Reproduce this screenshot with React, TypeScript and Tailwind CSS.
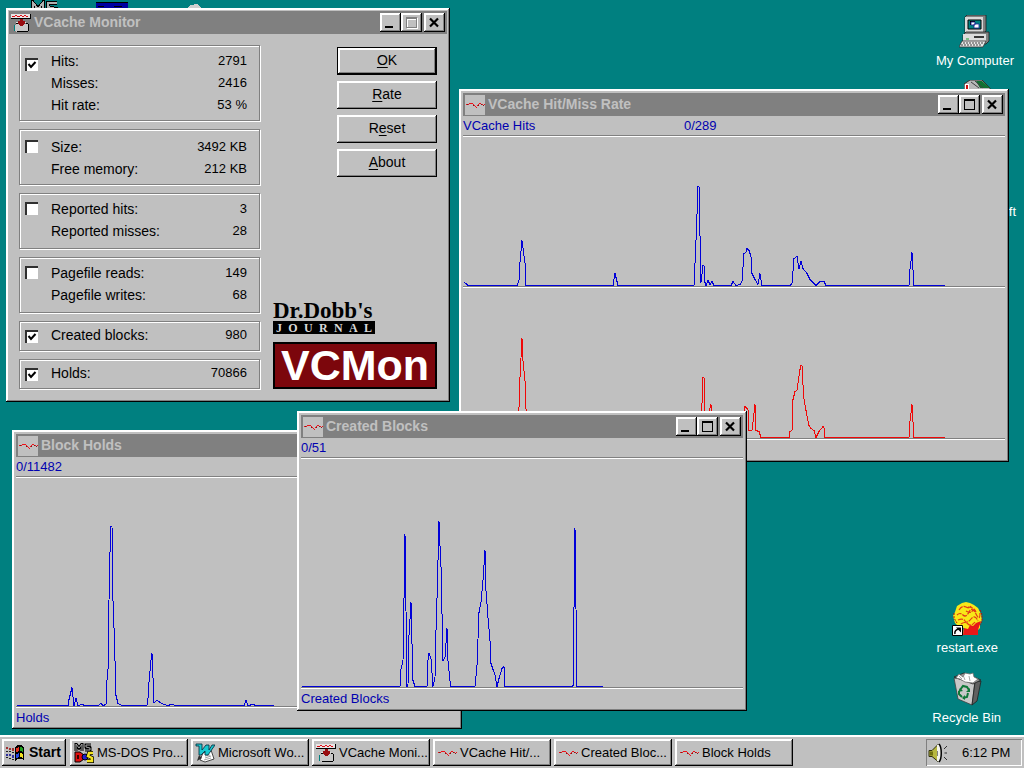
import type { ReactNode } from "react";

const RAISED =
  "bg-[#c0c0c0] shadow-[inset_-1px_-1px_#000,inset_1px_1px_#fff,inset_-2px_-2px_#808080,inset_2px_2px_#fff]";

const HITS =
  "1,145 3,146 5,148 54,148 56,143 57,125 59,103 61,118 62,125 63,148 150,148 152,136 154,144 155,148 231,148 233,103 234,77 235,49 236,49 237,98 238,145 240,128 241,128 242,145 243,148 245,143 247,147 249,144 251,148 268,148 270,144 273,148 277,147 279,144 281,116 283,115 284,111 286,113 288,119 289,136 292,142 295,147 297,136 299,148 327,148 329,146 331,121 334,119 336,131 338,124 340,131 344,136 347,142 350,145 353,148 357,144 361,144 363,148 446,148 447,132 449,115 450,132 451,148 482,148";
const MISSES =
  "1,148 55,148 57,88 59,49 60,71 62,91 64,148 238,148 239,114 240,88 241,88 242,121 243,148 246,122 248,115 249,122 250,148 281,148 282,117 285,120 286,141 289,141 292,115 293,141 296,142 298,148 326,148 327,142 329,141 330,110 332,102 334,101 336,87 337,80 338,76 339,76 340,95 341,109 343,121 346,136 348,139 351,141 353,148 356,142 360,137 361,138 362,148 446,148 447,132 449,115 450,132 451,148 482,148";
const BLOCKS =
  "1,227 99,227 100,210 102,201 103,139 104,75 105,151 106,227 107,225 108,176 110,143 111,184 112,221 114,227 126,227 127,201 128,194 130,199 132,227 134,218 135,171 136,139 137,101 138,62 139,86 140,107 142,201 144,198 146,169 147,201 149,221 150,227 174,227 176,206 178,153 180,143 182,121 184,91 185,131 187,158 189,181 190,204 192,210 194,215 196,227 198,219 201,209 203,207 204,227 272,227 273,149 274,69 275,149 276,227 302,227";
const HOLDS =
  "1,227 52,227 53,221 56,209 58,227 60,220 62,227 66,226 69,227 82,227 85,225 87,227 90,226 91,202 92,192 93,122 94,74 95,48 96,48 97,122 98,149 99,182 100,217 102,225 106,227 131,227 132,220 133,204 135,182 136,175 138,224 141,222 146,225 151,227 156,226 160,227 228,227 230,222 232,227 237,226 240,227 258,227";

function PulseIcon() {
  return (
    <svg viewBox="0 0 20 20" className="size-5 shrink-0 bg-[#c0c0c0]" aria-hidden="true" shapeRendering="crispEdges">
      <path d="M1 9.500h3M4 8.500h4M8 9.500h1M9 10.500h1M10 11.500h1M11 12.500h1M12 10.500h1M13 9.500h1M14 8.500h2M17 9.500h1M19 9.500h1" stroke="#f01018" fill="none" />
      <path d="M2 9.500h1M8 10.500h1M13 10.500h1M16 9.500h1M18 10.500h1" stroke="#702020" fill="none" />
    </svg>
  );
}

function CacheIcon() {
  return (
    <svg viewBox="0 0 20 20" className="size-5 shrink-0" aria-hidden="true" shapeRendering="crispEdges">
      <path d="M5 11h12v1h1v6h-1v1H5v-1H4v-6h1z" fill="#c8c8c8" />
      <path d="M5 10.500h2M15 10.500h2M17.500 11v7M6 18.500h11" stroke="#000" fill="none" />
      <path d="M3.500 12v6" stroke="#008080" fill="none" />
      <path d="M5 9.500h10" stroke="#e0e0e0" fill="none" />
      <path d="M0 1h19v4H0z" fill="#e8e4e4" />
      <path d="M0 5.500h20M19.500 1v5" stroke="#000" fill="none" />
      <path d="M1 3.500h3M4 2.500h2M6 3.500h3M9 2.500h2M11 3.500h2M13 2.500h2M15 3.500h2" stroke="#e01018" fill="none" />
      <path d="M9 6h3v2h2v3h-1v1h-1v1h-3v-1H8v-1H7V8h2z" fill="#980c10" />
    </svg>
  );
}

function MsDosIcon() {
  return (
    <svg viewBox="0 0 20 20" className="size-5 shrink-0" aria-hidden="true">
      <path d="M2 8V1l3 4 3-4v7M17 2h-5v2l4 1v2h-5" fill="none" stroke="#000" strokeWidth="3" />
      <path d="M2 8V1l3 4 3-4v7M17 2h-5v2l4 1v2h-5" fill="none" stroke="#a8a8a8" />
      <path d="M1 9h5l4 3v4l-4 3H1z" fill="#e01010" stroke="#000" />
      <path d="M4 12v4" stroke="#000" strokeWidth="1.500" />
      <circle cx="11" cy="14" r="3" fill="#2020d0" stroke="#000" />
      <path d="M19 10h-4l-1 3 4 2v3h-5" fill="none" stroke="#000" strokeWidth="4" />
      <path d="M19 10h-4l-1 3 4 2v3h-5" fill="none" stroke="#f4e420" strokeWidth="2.500" />
    </svg>
  );
}

function WordIcon() {
  return (
    <svg viewBox="0 0 20 20" className="size-5 shrink-0" aria-hidden="true">
      <path d="M8 10l8-3 3 9-9 3-5-2z" fill="#fff" stroke="#202020" strokeWidth=".8" />
      <path d="M10 13l5-1M10 15l6-2M9 17l7-2" stroke="#888" strokeWidth=".8" />
      <path d="M1 1h6v6l4-5h3v5l3-5h3l-7 10h-3V8l-4 4H4V3H1z" fill="#18c8d0" stroke="#083848" strokeWidth=".9" />
      <path d="M4 12l-2 6 5-3z" fill="#303030" />
    </svg>
  );
}

function FlagIcon() {
  return (
    <svg viewBox="0 0 20 20" className="size-5 shrink-0" aria-hidden="true" shapeRendering="crispEdges">
      <path d="M10 4l2-2h4l3 2v13l-3-1h-3l-3 2z" fill="#000" />
      <path d="M11 5l3-1v4l-3 1z" fill="#e03020" />
      <path d="M15 4l3 1v4l-3-1z" fill="#20a020" />
      <path d="M11 11l3-1v4l-3 1z" fill="#2848e0" />
      <path d="M15 10l3 1v4l-3-1z" fill="#f0e020" />
      <path d="M7 5h2v3H7zM4 5h2v2H4zM1 4h2v2H1z" fill="#a03030" />
      <path d="M7 12h2v3H7zM4 11h2v2H4zM1 11h2v2H1z" fill="#3030a0" />
      <path d="M7 9h2v1H7zM4 8h2v1H4zM1 8h2v1H1zM7 16h2v1H7zM4 15h2v1H4zM1 14h2v1H1z" fill="#202020" />
    </svg>
  );
}

function SpeakerIcon() {
  return (
    <svg viewBox="0 0 20 20" className="size-5 shrink-0" aria-hidden="true">
      <path d="M1 7.500h3l6-6v17l-6-5H1z" fill="#b8b840" stroke="#303010" />
      <path d="M2 8.500h3v4H2z" fill="#707010" />
      <path d="M9 2h2l2 4v8l-2 4H9z" fill="#f4f4ec" />
      <path d="M11 1c3 3 3 15 0 18" fill="none" stroke="#000" strokeWidth="1.500" />
      <path d="M9.500 8v5" stroke="#808080" />
      <path d="M16 6l3-3M16.500 10H19M16 14l3 3" stroke="#303030" fill="none" />
    </svg>
  );
}

function ComputerIcon() {
  return (
    <svg viewBox="0 0 32 34" className="h-[34px] w-8" aria-hidden="true">
      <path d="M6 2l2-2h19v16l-2 2H6z" fill="#808080" stroke="#202020" strokeWidth=".8" />
      <path d="M6 2h18v15H6z" fill="#d8d8d8" />
      <path d="M9 5h13v9H9z" fill="#008080" stroke="#000" />
      <path d="M11 6h5v4h-5z" fill="#000" />
      <path d="M12 7h4v3h-4zM15 9h5v4h-5z" fill="#fff" stroke="#182090" strokeWidth=".8" />
      <path d="M4 20l3-3h23v9l-3 3H4z" fill="#808080" stroke="#202020" strokeWidth=".8" />
      <path d="M4 19h23v7H4z" fill="#dcdcdc" />
      <path d="M15 22h10" stroke="#000" strokeWidth="1.500" />
      <path d="M7 24h3" stroke="#20a030" />
      <path d="M3 26h24l-3 6H0z" fill="#e8e8e8" stroke="#303030" strokeWidth=".8" />
      <path d="M4 28h21M2 30h21" stroke="#404040" strokeDasharray="2 1" />
    </svg>
  );
}

function ExplosionIcon() {
  return (
    <svg viewBox="0 0 34 34" className="size-[34px]" aria-hidden="true">
      <path d="M12 1l4-1 4 1 4 2 4 3 3 6 1 6-2 4v4l-2 2v5H13l1-7-5-1-4-4-2-7 2-4 2-6z" fill="#f8e818" />
      <path d="M14 26l4 1 2-4 3 1 3-3 5-2-2 6-1 3v5H13z" fill="#e81818" />
      <path d="M9 8q3-5 7-3t5-1M18 5q6 0 8 5M7 13q3-3 6 0t6-3 7 2 4-1M8 18q5-2 7 1t6-2 7 2M16 9q5 3 7-1M11 22q4-3 7 0t7-2" fill="none" stroke="#e03818" strokeWidth="1.200" strokeDasharray="5 1" />
      <path d="M4 11v5l3 5M30 8l2 5v6l-2 4" fill="none" stroke="#b01010" strokeDasharray="2 1" />
      <path d="M2.500 23.500h10v10h-10z" fill="#fff" stroke="#000" />
      <path d="M5 32q-1-4 4-5" fill="none" stroke="#000" strokeWidth="1.500" />
      <path d="M6 25.500h5v5z" fill="#000" />
    </svg>
  );
}

function RecycleIcon() {
  return (
    <svg viewBox="0 0 32 34" className="h-[34px] w-8" aria-hidden="true">
      <path d="M3 6l4 21 14 6 3-24z" fill="#c8c8c8" stroke="#404040" strokeWidth=".8" />
      <path d="M21 33l5-4 4-20-6 1z" fill="#606060" stroke="#202020" strokeWidth=".8" />
      <path d="M3 5l10-4 17 7-8 4z" fill="#989898" stroke="#202020" strokeWidth=".8" />
      <path d="M5 6l3-4 4 3 2-4 5 1 3-1 1 4 4 2-5 4-8-1-5-3z" fill="#fff" stroke="#707070" strokeWidth=".8" />
      <path d="M12 3l2 5M18 4l1 5M8 4l3 3" stroke="#909090" strokeWidth=".8" />
      <path d="M9 18l3-4 4 1 2 3M17 21l-1 4-4 1M11 25l-3-3v-3" fill="none" stroke="#107838" strokeWidth="2" />
      <path d="M19 16v4h-4zM14 23v5l-3-2zM7 20l2-4 3 3z" fill="#107838" />
    </svg>
  );
}

function Caption({ kind, disabled }: { kind: "Minimize" | "Maximize" | "Close"; disabled?: boolean }) {
  return (
    <button type="button" aria-label={kind} disabled={disabled} className={`grid h-[19px] w-[21px] place-items-center ${RAISED}`}>
      <svg viewBox="0 0 13 13" className="size-[13px]" fill="none" stroke={disabled ? "#808080" : "#000"} shapeRendering={kind === "Close" ? "auto" : "crispEdges"}>
        {kind === "Minimize" && <path d="M1 11h8" strokeWidth="2" />}
        {kind === "Maximize" && disabled && <path d="M2.500 2v10.500h10V2M3 3.500h9" stroke="#fff" />}
        {kind === "Maximize" && <path d="M1.500 1v10.500h10V1M1 1.500h11M1 2.500h11" />}
        {kind === "Close" && <path d="M2 2.500l8 8M10 2.500l-8 8" strokeWidth="2.200" />}
      </svg>
    </button>
  );
}

function Window({ title, place, icon, fixed, children }: { title: string; place: string; icon: ReactNode; fixed?: boolean; children: ReactNode }) {
  return (
    <section aria-label={title} className={`absolute flex flex-col ${fixed ? "p-[3px]" : "p-1"} ${RAISED} ${place}`}>
      <header className="flex h-[23px] shrink-0 items-center gap-[3px] bg-[#808080] px-[2px] text-[14px] font-bold text-[#c0c0c0]">
        {icon}
        <h2 className="grow whitespace-nowrap">{title}</h2>
        <div className="flex gap-[2px]">
          <div className="flex">
            <Caption kind="Minimize" />
            <Caption kind="Maximize" disabled={fixed} />
          </div>
          <Caption kind="Close" />
        </div>
      </header>
      {children}
    </section>
  );
}

function Chart({ points, label, size, red }: { points: string; label: string; size: string; red?: boolean }) {
  return (
    <svg role="img" aria-label={label} className={`block w-full shrink-0 ${size}`}>
      <polyline
        points={points}
        transform="translate(0 0.5)"
        fill="none"
        stroke={red ? "#f00808" : "#0000d8"}
        shapeRendering="crispEdges"
      />
    </svg>
  );
}

function Rule() {
  return <div className="h-[2px] shrink-0 border-t border-b border-t-[#808080] border-b-white" />;
}

function Stats({ id, rows, checked, pad, mark }: { id: string; rows: [string, string][]; checked?: boolean; pad: string; mark: string }) {
  return (
    <div className={`flex gap-[13px] border border-[#808080] pr-3 pl-[5px] shadow-[1px_1px_#fff,inset_1px_1px_#fff] ${pad}`}>
      <span className={`relative size-[13px] ${mark}`}>
        <input
          id={id}
          type="checkbox"
          defaultChecked={checked}
          className="peer block size-[13px] appearance-none border-t-2 border-l-2 border-[#303030] bg-white"
        />
        <svg viewBox="0 0 13 13" className="pointer-events-none absolute inset-0 hidden size-[13px] peer-checked:block" aria-hidden="true">
          <path d="M3.500 6l2.500 3 4.500-5" fill="none" stroke="#000" strokeWidth="2" />
        </svg>
      </span>
      <div className="grow leading-[22px]">
        {rows.map(([name, value]) => (
          <div key={name} className="flex justify-between">
            <label htmlFor={id} className="text-[14px]">{name}</label>
            <output className="text-[13px]">{value}</output>
          </div>
        ))}
      </div>
    </div>
  );
}

function DialogButton({ before, hot, after, main }: { before?: string; hot: string; after: string; main?: boolean }) {
  return (
    <button type="button" className={`h-7 w-[100px] pb-[2px] text-[14px] ${RAISED} ${main ? "border border-black" : ""}`}>
      {before}
      <span className="underline underline-offset-2">{hot}</span>
      {after}
    </button>
  );
}

function DesktopIcon({ label, place, children }: { label: string; place: string; children?: ReactNode }) {
  return (
    <a href="#" className={`absolute flex flex-col items-center gap-1 text-[13px] leading-4 whitespace-nowrap text-white ${place}`}>
      {children}
      <span>{label}</span>
    </a>
  );
}

const TASKS: [string, ReactNode][] = [
  ["MS-DOS Pro...", <MsDosIcon />],
  ["Microsoft Wo...", <WordIcon />],
  ["VCache Moni...", <CacheIcon />],
  ["VCache Hit/...", <PulseIcon />],
  ["Created Bloc...", <PulseIcon />],
  ["Block Holds", <PulseIcon />],
];

export default function App() {
  return (
    <div className="flex min-h-screen flex-col overflow-hidden bg-[#008080] font-['Liberation_Sans',Arial,sans-serif] text-[13px] text-black">
      <main className="relative grow">
        <svg className="absolute top-0 left-7 h-4 w-44" viewBox="0 0 176 16" aria-hidden="true" shapeRendering="crispEdges">
          <path d="M5 16V3l5 6 5-6v13M29 3h-9v4l8 2v5" fill="none" stroke="#000" strokeWidth="4" />
          <path d="M5 16V3l5 6 5-6v13M29 3h-9v4l8 2v5" fill="none" stroke="#b0b0b0" strokeWidth="2" />
          <path d="M68 2h32v14H68z" fill="#0000a0" />
          <path d="M68 2.500h32M70 6.500h6M86 6.500h8" stroke="#000" />
          <path d="M160 8l2-3h3l1-1h4l3 4z" fill="#d0d0d0" />
        </svg>
        <DesktopIcon label="My Computer" place="top-[15px] right-[10px]"><ComputerIcon /></DesktopIcon>
        <svg className="absolute top-20 right-8 h-4 w-7" viewBox="0 0 28 16" aria-hidden="true">
          <path d="M0 16V4l6-4h12l8 8v8z" fill="#b8b8b8" stroke="#303030" />
          <path d="M1 4h4v7H1z" fill="#fff" />
          <path d="M2 5h2v4H2z" fill="#d01010" />
          <path d="M12 1h6l8 7H16z" fill="#107030" />
          <path d="M7 2l8 6M11 1l8 7" stroke="#404040" />
        </svg>
        <DesktopIcon label="Microsoft" place="top-[204px] right-2" />
        <DesktopIcon label="restart.exe" place="top-[602px] right-[26px]"><ExplosionIcon /></DesktopIcon>
        <DesktopIcon label="Recycle Bin" place="top-[672px] right-[23px]"><RecycleIcon /></DesktopIcon>

        <Window title="VCache Monitor" place="left-[6px] top-2 w-[444px]" icon={<CacheIcon />} fixed>
          <div className="flex justify-between px-[10px] pt-[11px] pb-[10px]">
            <div className="flex w-[241px] flex-col gap-2">
              <Stats id="hits" checked pad="pt-1 pb-1" mark="mt-2" rows={[["Hits:", "2791"], ["Misses:", "2416"], ["Hit rate:", "53 %"]]} />
              <Stats id="size" pad="pt-[6px] pb-1" mark="mt-1" rows={[["Size:", "3492 KB"], ["Free memory:", "212 KB"]]} />
              <Stats id="reported" pad="pt-1 pb-[6px]" mark="mt-1" rows={[["Reported hits:", "3"], ["Reported misses:", "28"]]} />
              <Stats id="pagefile" pad="pt-1 pb-[6px]" mark="mt-1" rows={[["Pagefile reads:", "149"], ["Pagefile writes:", "68"]]} />
              <Stats id="created" checked pad="pt-[2px] pb-1" mark="mt-[6px]" rows={[["Created blocks:", "980"]]} />
              <Stats id="holds" checked pad="pt-[2px] pb-1" mark="mt-[6px]" rows={[["Holds:", "70866"]]} />
            </div>
            <div className="flex w-[164px] flex-col justify-between pt-[2px]">
              <div className="flex flex-col items-end gap-[6px]">
                <DialogButton hot="O" after="K" main />
                <DialogButton hot="R" after="ate" />
                <DialogButton before="R" hot="e" after="set" />
                <DialogButton hot="A" after="bout" />
              </div>
              <div className="flex flex-col gap-2">
                <div className="w-[102px] font-['Liberation_Serif',serif] font-bold">
                  <p className="text-[23px] leading-5 whitespace-nowrap">Dr.Dobb's</p>
                  <p className="flex h-[13px] items-center justify-between bg-black px-[3px] text-[12px] leading-3 text-[#d8d8d8]">
                    {[..."JOURNAL"].map((letter) => (
                      <span key={letter}>{letter}</span>
                    ))}
                  </p>
                </div>
                <p className="grid h-[47px] place-items-center border-2 border-black bg-[#7c060c] text-[43px] leading-none font-bold text-white">
                  VCMon
                </p>
              </div>
            </div>
          </div>
        </Window>

        <Window title="VCache Hit/Miss Rate" place="left-[459px] top-[89px] h-[373px] w-[550px]" icon={<PulseIcon />}>
          <div className="grid h-[19px] shrink-0 grid-cols-[221px_1fr] leading-[19px] text-[#0000b0]">
            <span>VCache Hits</span>
            <span>0/289</span>
          </div>
          <Rule />
          <Chart points={HITS} label="VCache hits" size="h-[149px]" />
          <Rule />
          <Chart points={MISSES} label="VCache misses" size="mt-[1px] h-[149px]" red />
          <Rule />
        </Window>

        <Window title="Block Holds" place="left-3 top-[430px] h-[299px] w-[450px]" icon={<PulseIcon />}>
          <div className="h-[19px] shrink-0 leading-[19px] text-[#0000b0]">0/11482</div>
          <Rule />
          <Chart points={HOLDS} label="Block holds" size="h-[228px]" />
          <Rule />
          <div className="leading-[19px] text-[#0000b0]">Holds</div>
        </Window>

        <Window title="Created Blocks" place="left-[297px] top-[411px] h-[300px] w-[450px]" icon={<PulseIcon />}>
          <div className="h-[19px] shrink-0 leading-[19px] text-[#0000b0]">0/51</div>
          <Rule />
          <Chart points={BLOCKS} label="Created blocks" size="h-[228px]" />
          <Rule />
          <div className="leading-[19px] text-[#0000b0]">Created Blocks</div>
        </Window>
      </main>

      <footer className="flex h-[33px] items-center gap-1 border-t-2 border-white bg-[#c0c0c0] px-[2px] pt-[2px] pb-[2px]">
        <button type="button" className={`flex h-[27px] w-16 shrink-0 items-center gap-1 pl-[3px] text-[14px] font-bold ${RAISED}`}>
          <FlagIcon />
          Start
        </button>
        <nav className="flex grow gap-[3px]">
          {TASKS.map(([name, icon]) => (
            <button key={name} type="button" className={`flex h-[27px] w-[118px] items-center gap-[3px] overflow-hidden pl-1 whitespace-nowrap ${RAISED}`}>
              {icon}
              {name}
            </button>
          ))}
        </nav>
        <div className="flex h-[27px] w-24 shrink-0 items-center gap-[14px] pl-[2px] shadow-[inset_1px_1px_#808080,inset_-1px_-1px_#fff]">
          <SpeakerIcon />
          <time>6:12 PM</time>
        </div>
      </footer>
    </div>
  );
}
